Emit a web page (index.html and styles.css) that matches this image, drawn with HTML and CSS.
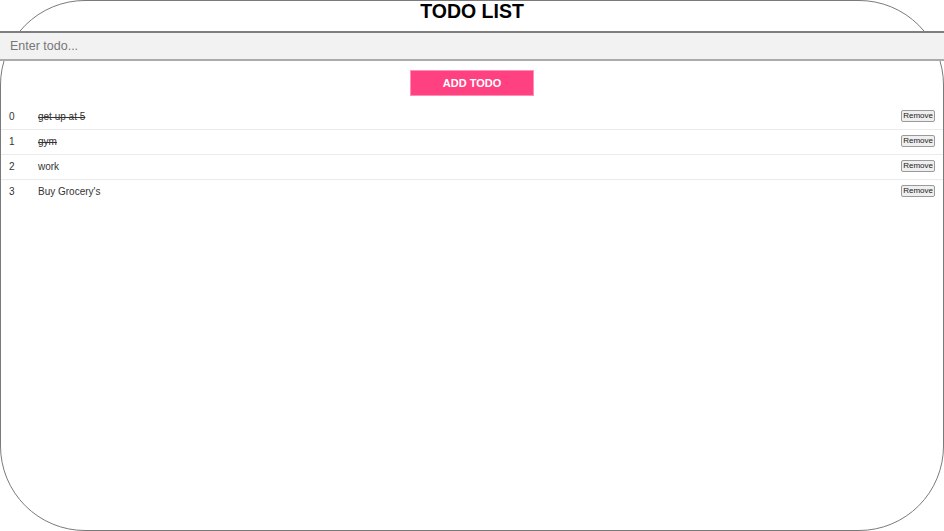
FILE: index.html
```html
<!DOCTYPE html>
<html>
<head>
<meta charset="utf-8">
<link rel="stylesheet" href="styles.css">
</head>
<body>
<div class="app">
  <h1 class="title">TODO LIST</h1>
  <input class="todo-input" type="text" placeholder="Enter todo...">
  <div class="actions"><button class="add-btn">ADD TODO</button></div>
  <ul class="todo-list">
    <li class="todo-row"><span class="idx">0</span><span class="text done">get up at 5</span><button class="remove">Remove</button></li>
    <li class="todo-row"><span class="idx">1</span><span class="text done">gym</span><button class="remove">Remove</button></li>
    <li class="todo-row"><span class="idx">2</span><span class="text">work</span><button class="remove">Remove</button></li>
    <li class="todo-row"><span class="idx">3</span><span class="text">Buy Grocery's</span><button class="remove">Remove</button></li>
  </ul>
</div>
</body>
</html>
```
FILE: styles.css
```css
html, body {
  margin: 0;
  padding: 0;
  background: #fff;
}
body {
  font-family: "Liberation Sans", Arial, sans-serif;
}
.app {
  box-sizing: border-box;
  width: 944px;
  height: 531px;
  border: 1px solid #7a7a7a;
  border-radius: 85px;
  display: flex;
  flex-direction: column;
}
.title {
  margin: 0;
  height: 30px;
  font-size: 19.5px;
  line-height: 20px;
  font-weight: bold;
  text-align: center;
  color: #000;
}
.todo-input {
  box-sizing: border-box;
  display: block;
  margin: 0 -1px;
  width: calc(100% + 2px);
  height: 30px;
  border: none;
  border-top: 2px solid #7f7f7f;
  border-bottom: 2px solid #ababab;
  background: #f2f2f2;
  padding: 0 0 0 10px;
  font-family: "Liberation Sans", Arial, sans-serif;
  font-size: 12.5px;
  color: #333;
  outline: none;
}
.todo-input::placeholder {
  color: #777;
}
.actions {
  display: flex;
  justify-content: center;
  padding-top: 9px;
}
.add-btn {
  box-sizing: border-box;
  width: 124px;
  height: 26px;
  border: 1px solid #ff8fb0;
  background: #ff4081;
  color: #fff;
  font-family: "Liberation Sans", Arial, sans-serif;
  font-weight: bold;
  font-size: 11px;
  padding: 0;
}
.todo-list {
  list-style: none;
  margin: 9px 0 0;
  padding: 0;
}
.todo-row {
  display: grid;
  grid-template-columns: 29px 1fr auto;
  align-items: center;
  height: 22px;
  padding: 0 8px 2px 8px;
  font-size: 10px;
  color: #333;
  border-top: 1px solid #ebebeb;
}
.todo-row:first-child {
  border-top: none;
}
.text.done {
  text-decoration: line-through;
}
.remove {
  box-sizing: border-box;
  height: 12px;
  padding: 0 1px;
  font-family: "Liberation Sans", Arial, sans-serif;
  font-size: 8px;
  line-height: 8px;
  color: #222;
  background: #efefef;
  border: 1px solid #9a9a9a;
  border-radius: 2px;
}
```
